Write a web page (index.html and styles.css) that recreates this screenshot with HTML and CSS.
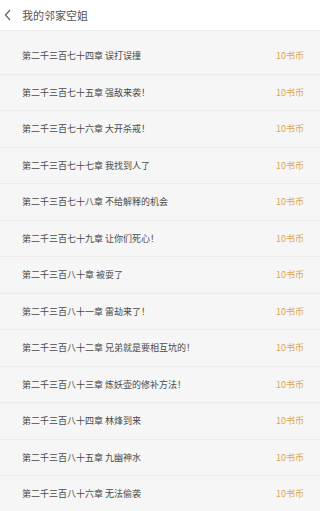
FILE: index.html
```html
<!DOCTYPE html>
<html lang="zh">
<head>
    <meta charset="UTF-8">
    <meta name="viewport" content="width=device-width, initial-scale=1.0">
    <title>我的邻家空姐</title>
    <link rel="stylesheet" href="styles.css">
</head>
<body>
    <div class="header">
        <svg class="back" width="8" height="12" viewBox="0 0 8 12"><path d="M6 1 L1.5 6 L6 11" fill="none" stroke="#666" stroke-width="1.3"/></svg>
        <span class="title">我的邻家空姐</span>
    </div>
    <ul class="chapters">
        <li><span class="name">第二千三百七十四章 误打误撞</span><span class="price">10书币</span></li>
        <li><span class="name">第二千三百七十五章 强敌来袭！</span><span class="price">10书币</span></li>
        <li><span class="name">第二千三百七十六章 大开杀戒！</span><span class="price">10书币</span></li>
        <li><span class="name">第二千三百七十七章 我找到人了</span><span class="price">10书币</span></li>
        <li><span class="name">第二千三百七十八章 不给解释的机会</span><span class="price">10书币</span></li>
        <li><span class="name">第二千三百七十九章 让你们死心！</span><span class="price">10书币</span></li>
        <li><span class="name">第二千三百八十章 被耍了</span><span class="price">10书币</span></li>
        <li><span class="name">第二千三百八十一章 雷劫来了！</span><span class="price">10书币</span></li>
        <li><span class="name">第二千三百八十二章 兄弟就是要相互坑的！</span><span class="price">10书币</span></li>
        <li><span class="name">第二千三百八十三章 炼妖壶的修补方法！</span><span class="price">10书币</span></li>
        <li><span class="name">第二千三百八十四章 林烽到来</span><span class="price">10书币</span></li>
        <li><span class="name">第二千三百八十五章 九幽神水</span><span class="price">10书币</span></li>
        <li><span class="name">第二千三百八十六章 无法偷袭</span><span class="price">10书币</span></li>
    </ul>
</body>
</html>
```

FILE: styles.css
```css
body { margin: 0; background: #f6f6f6; font-family: "Noto Sans CJK SC", "Noto Sans", sans-serif; overflow: hidden; }
.header { height: 30px; background: #fff; border-bottom: 1px solid #ececec; display: flex; align-items: center; }
.back { margin-left: 4px; margin-right: 10px; }
.title { font-size: 11px; color: #555; }
.chapters { list-style: none; margin: 0; padding: 7px 0 0; }
.chapters li { height: 35.5px; border-bottom: 1px solid #ececec; display: flex; align-items: center; justify-content: space-between; padding: 0 16px 0 22px; }
.name { font-size: 9px; color: #4a4a4a; }
.price { font-size: 9px; color: #d8a853; }
```
